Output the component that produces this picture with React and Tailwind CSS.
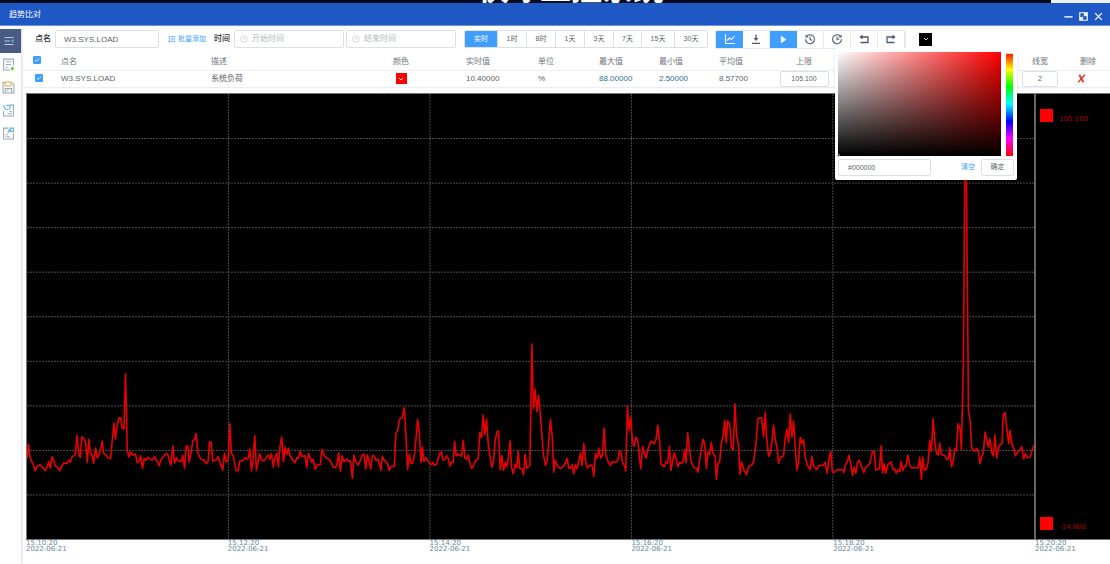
import { useState } from "react";
import clsx from "clsx";

const ranges = [
  { label: "实时", className: "w-8" },
  { label: "1时", className: "w-[29px]" },
  { label: "8时", className: "w-[29px]" },
  { label: "1天", className: "w-[29px]" },
  { label: "3天", className: "w-[29px]" },
  { label: "7天", className: "w-7" },
  { label: "15天", className: "w-[33px]" },
  { label: "30天", className: "w-[33px]" },
];

const ticks = ["15:10:20", "15:12:20", "15:14:20", "15:16:20", "15:18:20"];

// x,y pairs on a 3024 x 1335 grid, one slice for every two minutes
const trace = [
  "0,1093 4,1050 9,1088 15,1103 20,1113 24,1129 31,1116 39,1111 46,1119 55,1128 61,1116 65,1102 70,1121 75,1087 80,1098 85,1115 92,1118 99,1129 105,1113 110,1106 120,1107 125,1098 130,1103 135,1088 145,1080 150,1022 155,1076 160,1089 165,1027 170,1031 176,1044 181,1105 186,1035 190,1074 196,1082 200,1107 206,1061 211,1091 218,1076 226,1040 230,1077 236,1081 243,1090 251,1093 256,1038 261,986 266,1034 271,991 276,970 281,970 286,1001 291,1004 296,839 301,1066 306,1088 311,1073 320,1082 326,1079 331,1105 337,1099 341,1084 347,1122 352,1092 357,1098 363,1089 376,1098 383,1087 389,1098 397,1114 402,1096 412,1084 418,1077 423,1080 427,1098 432,1112 438,1055 443,1106 448,1090 454,1099 463,1102 468,1083 473,1121 478,1056 483,1056 487,1103 493,1074 498,1038 503,1037 508,1018 513,1074 521,1094 531,1097 539,1108 544,1100 548,1043 553,1043 558,1100 568,1097 574,1086 581,1108 588,1127 593,1077 598,1103 604,1094",
  "609,988 614,1078 619,1082 628,1129 634,1129 639,1100 649,1098 654,1090 659,1094 665,1090 669,1064 674,1129 679,1094 684,1024 689,1128 694,1101 699,1078 704,1096 712,1100 719,1088 725,1082 730,1094 734,1078 740,1119 744,1092 750,1076 755,1117 760,1054 765,1029 770,1102 775,1058 780,1080 785,1061 790,1084 797,1096 805,1105 810,1090 815,1092 820,1070 825,1086 835,1084 840,1120 845,1077 850,1088 855,1104 859,1094 866,1124 872,1112 881,1110 886,1065 893,1084 901,1092 911,1098 919,1118 927,1120 931,1108 936,1075 941,1131 946,1084 951,1102 961,1094 966,1101 971,1099 977,1152 982,1082 987,1101 994,1112 999,1103 1007,1081 1012,1080 1017,1124 1022,1081 1027,1098 1032,1124 1037,1084 1043,1085 1048,1098 1054,1094 1059,1112 1063,1128 1067,1086 1073,1098 1082,1106 1088,1128 1093,1116 1103,1115 1108,1015 1113,1010 1118,976 1127,969 1133,940 1138,1028 1143,1126 1148,1080 1153,1107 1158,1106 1164,1078 1169,1023 1173,975 1178,1013 1183,1104 1187,1058 1192,1101 1198,1090 1206,1103",
  "1214,1111 1219,1104 1224,1113 1230,1109 1239,1078 1244,1072 1249,1097 1254,1096 1260,1084 1265,1092 1270,1115 1275,1103 1280,1104 1284,1041 1289,1084 1295,1080 1305,1086 1310,1038 1315,1092 1320,1094 1325,1082 1330,1106 1335,1122 1340,1116 1346,1100 1355,1091 1360,1014 1365,1029 1370,962 1375,1020 1380,974 1385,1048 1390,1086 1396,1118 1401,1100 1406,1041 1411,1012 1416,1010 1421,1126 1426,1084 1431,1128 1436,1104 1441,1117 1446,1086 1451,1039 1455,1118 1460,1138 1466,1110 1471,1120 1475,1071 1480,1123 1486,1123 1491,1141 1496,1080 1501,1121 1510,1113 1513,948 1516,749 1521,942 1526,885 1531,952 1536,904 1541,953 1551,1083 1557,1113 1562,1098 1567,1040 1572,975 1577,1024 1582,1133 1586,1097 1592,1113 1602,1123 1613,1113 1622,1092 1627,1122 1633,1119 1637,1111 1642,1138 1647,1111 1652,1123 1662,1076 1667,1114 1672,1047 1677,1097 1683,1120 1693,1111 1698,1117 1702,1146 1707,1078 1712,1092 1717,1061 1723,1092 1728,1082 1733,1001 1738,1079 1744,1099 1752,1113 1758,1102 1768,1104 1774,1098 1779,1070 1784,1074 1788,1102 1794,1114 1798,1130 1803,935 1808,1007 1813,969",
  "1818,1041 1823,1056 1829,1028 1834,1036 1839,1088 1843,1123 1849,1056 1853,1073 1859,1091 1865,1063 1874,1040 1884,1048 1889,1034 1894,992 1900,1046 1904,1110 1914,1117 1919,1102 1924,1106 1929,1056 1934,1128 1940,1094 1944,1075 1950,1098 1955,1116 1960,1104 1966,1107 1971,1096 1975,1065 1979,1105 1984,1015 1989,1060 1994,1100 2003,1120 2010,1121 2015,1133 2020,1094 2025,1065 2030,1035 2035,1048 2040,1122 2045,1073 2050,1080 2055,1044 2060,1076 2066,1084 2070,1155 2075,1107 2080,1103 2085,1046 2091,1021 2095,978 2100,1046 2104,980 2110,988 2116,1062 2121,1066 2126,928 2131,1024 2136,1047 2141,1140 2146,1103 2153,1126 2161,1141 2167,1116 2177,1111 2182,1102 2189,1048 2195,972 2206,970 2212,1028 2217,953 2221,1028 2227,1086 2232,1076 2237,1043 2242,992 2247,1034 2252,1060 2257,1106 2263,1088 2272,1085 2277,1030 2282,1005 2287,1044 2292,959 2297,1028 2302,980 2307,1063 2312,1127 2317,1103 2322,1029 2327,1046 2332,1036 2337,1088 2343,1111 2352,1126 2357,1086 2362,1114 2371,1126 2378,1114 2391,1112 2397,1104 2403,1137 2408,1094 2414,1072",
  "2418,1128 2423,1135 2432,1126 2449,1126 2453,1134 2458,1110 2463,1103 2468,1083 2474,1110 2479,1142 2484,1118 2489,1136 2494,1105 2499,1097 2504,1111 2513,1134 2518,1120 2531,1108 2539,1071 2544,1069 2549,1127 2560,1124 2565,1054 2569,1136 2574,1108 2579,1136 2585,1111 2595,1102 2600,1125 2606,1124 2610,1136 2615,1126 2621,1131 2625,1101 2630,1129 2635,1117 2640,1114 2645,1082 2650,1109 2655,1120 2676,1120 2681,1088 2686,1155 2690,1088 2695,1127 2701,1123 2706,1104 2711,1038 2716,1071 2721,973 2727,1049 2731,1076 2736,1082 2741,1046 2746,1080 2757,1084 2762,1095 2767,1093 2771,1060 2776,1117 2782,1098 2786,1062 2791,1068 2796,988 2802,1003 2806,1066 2812,798 2816,250 2818,191 2821,250 2826,798 2827,948 2832,978 2837,1061 2846,1070 2852,1062 2857,1074 2862,1108 2867,1088 2872,1074 2877,1013 2887,1058 2892,1034 2897,1073 2902,1084 2907,1021 2912,1091 2917,1062 2923,1050 2928,1048 2932,960 2937,955 2942,998 2948,1048 2952,1008 2957,1047 2963,1062 2968,1084 2973,1075 2982,1066 2987,1057 2993,1094 2998,1077 3004,1090 3013,1088 3018,1068 3024,1053",
];

const tools = [
  { name: "chart", icon: <TrendIcon />, active: true },
  { name: "download", icon: <DownloadIcon /> },
  { name: "play", icon: <PlayIcon />, active: true },
  { name: "back in time", icon: <ClockIcon flip /> },
  { name: "forward in time", icon: <ClockIcon /> },
  { name: "undo", icon: <TurnIcon /> },
  { name: "redo", icon: <TurnIcon flip /> },
];

function Icon({ children, className = "size-3", ...rest }) {
  return (
    <svg
      viewBox="0 0 24 24"
      fill="none"
      stroke="currentColor"
      strokeWidth="2"
      className={className}
      aria-hidden="true"
      {...rest}
    >
      {children}
    </svg>
  );
}

function TrendIcon() {
  return (
    <Icon strokeWidth="2.2">
      <path d="M3 2v19h19" />
      <path d="M6 15l5-5 4 3 6-7" />
    </Icon>
  );
}

function PlayIcon() {
  return (
    <Icon className="size-[9px]">
      <path d="M5 2l15 10L5 22z" fill="currentColor" stroke="none" />
    </Icon>
  );
}

function DownloadIcon() {
  return (
    <Icon strokeWidth="2.5">
      <path d="M12 3v10M4 20.5h16" />
      <path d="M7 10h10l-5 6z" fill="currentColor" stroke="none" />
    </Icon>
  );
}

function ClockIcon({ flip }) {
  return (
    <Icon strokeWidth="2.2" className={clsx("size-3", flip && "-scale-x-100")}>
      <path d="M19.5 7.5A9 9 0 1 0 21 12.5" />
      <path d="M21 3v6h-6z" fill="currentColor" stroke="none" />
      {flip ? <path d="M12 7v5.5l-4 2.5" /> : <path d="M12 7v5.5h4.5" />}
    </Icon>
  );
}

function TurnIcon({ flip }) {
  return (
    <Icon strokeWidth="2.6" className={clsx("size-3", flip && "-scale-x-100")}>
      <path d="M5 8h15v11H5" />
      <path d="M9 3v10L3 8z" fill="currentColor" stroke="none" />
    </Icon>
  );
}

function ClockFace() {
  return (
    <Icon className="size-2 shrink-0 text-[#c0c4cc]">
      <circle cx="12" cy="12" r="10" />
      <path d="M12 6v7h5" />
    </Icon>
  );
}

function Chevron() {
  return (
    <Icon className="size-2 text-white" strokeWidth="2.5">
      <path d="m6 9 6 6 6-6" />
    </Icon>
  );
}

function Sidebar() {
  const item = "flex h-[23px] w-full items-center justify-center text-[#9aa8ba]";
  return (
    <nav className="flex w-[22px] shrink-0 flex-col border-r border-[#dfe3ea] shadow-sm">
      <button aria-label="menu" className="flex h-6 items-center justify-center bg-[#495b80] pr-1 text-[#b8cbe6]">
        <Icon>
          <path d="M3 5h18M3 12h11M3 19h18" />
          <path d="M21 8v8l-5-4z" fill="#69b7f5" stroke="none" />
        </Icon>
      </button>
      <div className="flex flex-col pr-1">
        <button aria-label="new" className={item}>
          <Icon className="size-[13px]">
            <path d="M21 14V2H3v20h12" />
            <path d="M7 7h10M7 12h10M7 17h5" />
            <path d="M19 16v7M15.5 19.5h7" stroke="#67c23a" strokeWidth="2.5" />
          </Icon>
        </button>
        <button aria-label="save" className={item}>
          <Icon className="size-[13px]">
            <path d="M6 3H2v19h20V7l-4-4" />
            <path d="M6 2h11v7H6z" stroke="#e6b566" />
            <path d="M6 22v-8h12v8M9 18h3" />
          </Icon>
        </button>
        <button aria-label="import" className={item}>
          <Icon className="size-[13px]">
            <path d="M13 2h8v20H3v-9" />
            <path d="M10 18h8M14 14h4" />
            <path d="M2 3l5 7h5M8 4a4 4 0 1 1 5 6" stroke="#57b6dc" />
          </Icon>
        </button>
        <button aria-label="export" className={item}>
          <Icon className="size-[13px]">
            <path d="M12 2H3v20h18V12" />
            <path d="M7 18h8M7 14h3" />
            <path d="M11 12c0-5 3-7 6-7M15 2h6v6h-6z" stroke="#57b6dc" />
          </Icon>
        </button>
      </div>
    </nav>
  );
}

function DateInput({ id, label }) {
  return (
    <div className="flex h-[18px] w-[110px] items-center gap-1 rounded-xs border border-[#dcdfe6] pl-[5px]">
      <ClockFace />
      <input
        id={id}
        aria-label={label}
        placeholder={label}
        className="w-full min-w-0 text-[8px] leading-3 outline-none placeholder:text-[#b4b8c0]"
      />
    </div>
  );
}

function ColorPanel() {
  const [hex, setHex] = useState("#000000");
  return (
    <div className="absolute top-[15px] -left-[84px] z-10 w-[182px] rounded-xs bg-white px-[3px] pt-1 pb-1 shadow-md">
      <div className="flex justify-between pr-px">
        <div className="relative h-[104px] w-[163px] bg-[#ff0000]">
          <div className="h-full bg-linear-to-r/srgb from-white to-transparent">
            <div className="h-full bg-linear-to-t/srgb from-black to-transparent" />
          </div>
          <span className="absolute -bottom-px -left-px size-[3px] rounded-full border border-[#bbb]" />
        </div>
        <div className="relative h-[104px] w-[7px] bg-[linear-gradient(to_bottom,#f00_0%,#ff0_17%,#0f0_33%,#0ff_50%,#00f_67%,#f0f_83%,#f00_100%)]">
          <span className="absolute inset-x-0 top-0 h-0.5 border-b border-[#ddd] bg-white" />
        </div>
      </div>
      <div className="mt-[3px] flex h-[17px] items-center">
        <input
          aria-label="color"
          value={hex}
          onChange={(e) => setHex(e.target.value)}
          className="h-full w-[93px] rounded-xs border border-[#dcdfe6] px-[9px] text-[7px] text-[#606266]"
        />
        <button className="ml-auto px-[6px] text-[7px] text-[#409eff]">清空</button>
        <button className="h-full w-[33px] rounded-xs border border-[#dcdfe6] text-[7px] text-[#606266]">
          确定
        </button>
      </div>
    </div>
  );
}

function Toolbar() {
  const [point, setPoint] = useState("W3.SYS.LOAD");
  const [range, setRange] = useState("实时");

  return (
    <div className="flex h-[18px] items-center pl-[13px]">
      <label htmlFor="point" className="w-5 text-[8px] font-medium text-[#303133]">
        点名
      </label>
      <input
        id="point"
        value={point}
        onChange={(e) => setPoint(e.target.value)}
        className="h-[18px] w-[104px] rounded-xs border border-[#dcdfe6] px-2 text-[8px]"
      />
      <button className="ml-[9px] flex items-center gap-[2px] text-[7px] text-[#409eff]">
        <Icon className="size-2" strokeWidth="2.5">
          <path d="M8 5h14M8 12h14M8 19h14M2 12h4M4 3v6M2 17h3v4H2" />
        </Icon>
        批量添加
      </button>
      <label htmlFor="start" className="ml-2 w-5 text-[8px] font-medium text-[#303133]">
        时间
      </label>
      <div className="flex gap-[2px]">
        <DateInput id="start" label="开始时间" />
        <DateInput id="end" label="结束时间" />
      </div>

      <div className="ml-2 flex h-[18px] overflow-hidden rounded-xs border border-[#dcdfe6]">
        {ranges.map((r, i) => (
          <button
            key={r.label}
            onClick={() => setRange(r.label)}
            className={clsx(
              "text-[7px]",
              r.className,
              i > 0 && "border-l border-[#dcdfe6]",
              r.label === range && "bg-[#409eff] text-white"
            )}
          >
            {r.label}
          </button>
        ))}
      </div>

      <div className="ml-[7px] flex h-[19px] overflow-hidden rounded-xs border border-[#e4e8f0]">
        {tools.map((t) => (
          <button
            key={t.name}
            aria-label={t.name}
            className={clsx(
              "flex w-[27px] items-center justify-center",
              t.active ? "bg-[#409eff] text-white" : "border-r border-[#e4e8f0] text-[#4a5878]"
            )}
          >
            {t.icon}
          </button>
        ))}
      </div>

      <div className="relative ml-[13px]">
        <button aria-label="background" className="flex size-[13px] items-center justify-center bg-black">
          <Chevron />
        </button>
        <ColorPanel />
      </div>
    </div>
  );
}

function Check({ label }) {
  const [on, setOn] = useState(true);
  return (
    <span className="relative inline-flex size-2 align-middle">
      <input
        type="checkbox"
        aria-label={label}
        checked={on}
        onChange={() => setOn(!on)}
        className="size-2 appearance-none rounded-[1px] border border-[#dcdfe6] checked:border-[#409eff] checked:bg-[#409eff]"
      />
      {on && (
        <Icon className="pointer-events-none absolute inset-0 size-2 text-white" strokeWidth="2.5">
          <path d="m6 12 4 4 8-8" />
        </Icon>
      )}
    </span>
  );
}

function PointTable() {
  const box = "h-4 rounded-xs border border-[#dcdfe6] text-center align-middle text-[7px]";
  return (
    <table className="mt-[3px] w-full table-fixed text-left text-[8px] leading-3">
      <colgroup>
        <col className="w-[39px]" />
        <col className="w-[150px]" />
        <col />
        <col className="w-[130px]" />
        <col className="w-[72px]" />
        <col className="w-[61px]" />
        <col className="w-[60px]" />
        <col className="w-[60px]" />
        <col className="w-[55px]" />
        <col className="w-[60px]" />
        <col className="w-[180px]" />
        <col className="w-[52px]" />
        <col className="w-11" />
      </colgroup>
      <thead>
        <tr className="h-[19px] border-b border-[#ebeef5] text-[#6f737a] [&>th]:p-0 [&>th]:pt-[3px] [&>th]:font-normal">
          <th className="pt-0! pl-[11px]!">
            <Check label="all" />
          </th>
          <th>点名</th>
          <th>描述</th>
          <th className="text-center">颜色</th>
          <th>实时值</th>
          <th>单位</th>
          <th>最大值</th>
          <th>最小值</th>
          <th>平均值</th>
          <th className="text-center">上限</th>
          <th />
          <th className="text-center">线宽</th>
          <th className="text-center">删除</th>
        </tr>
      </thead>
      <tbody>
        <tr className="h-[17px] border-b border-[#ebeef5] [&>td]:p-0">
          <td className="pl-[13px]!">
            <Check label="W3.SYS.LOAD" />
          </td>
          <td>W3.SYS.LOAD</td>
          <td>系统负荷</td>
          <td>
            <button aria-label="line color" className="mx-auto flex size-[11px] items-center justify-center bg-[#ff0000]">
              <Chevron />
            </button>
          </td>
          <td>10.40000</td>
          <td>%</td>
          <td className="text-[#2f7096]">88.00000</td>
          <td className="text-[#2f7096]">2.50000</td>
          <td>8.57700</td>
          <td className="text-center leading-none">
            <input aria-label="upper limit" defaultValue="105.100" className={clsx(box, "w-[49px]")} />
          </td>
          <td />
          <td className="text-center leading-none">
            <input aria-label="line width" defaultValue="2" className={clsx(box, "w-9")} />
          </td>
          <td>
            <button aria-label="delete" className="mr-auto ml-[11px] block text-[#e03c31]">
              <Icon className="size-[9px]" strokeWidth="5">
                <path d="M6 2l11 20" />
                <path d="M21 2 3 22" strokeWidth="4" />
              </Icon>
            </button>
          </td>
        </tr>
      </tbody>
    </table>
  );
}

function Limit({ value }) {
  return (
    <div className="flex items-center gap-[6px]">
      <span className="size-[13px] bg-[#ff0000]" />
      <span className="pt-2 text-[7px] leading-[7px] text-[#a80000]">{value}</span>
    </div>
  );
}

function TimeLabel({ time }) {
  return (
    <div>
      {time}
      <br />
      2022-06-21
    </div>
  );
}

function TrendChart() {
  const lines = [1, 2, 3, 4, 5, 6, 7, 8, 9];
  return (
    <div className="mt-[5px] flex flex-1 flex-col pl-1 font-['DejaVu_Sans',sans-serif]">
      <div className="flex flex-1 border border-r-0 border-[#777] bg-black">
        <div className="relative flex-1 border-r-2 border-[#666]">
          <svg
            viewBox="0 0 3024 1335"
            preserveAspectRatio="none"
            className="absolute inset-0 size-full"
            fill="none"
          >
            <g stroke="#4c4c4c" strokeWidth="1" strokeDasharray="2 1">
              {lines.map((n) => (
                <path key={n} d={`M0 ${n * 133.5}H3024`} vectorEffect="non-scaling-stroke" />
              ))}
              {[1, 2, 3, 4].map((n) => (
                <path key={n} d={`M${n * 605} 0V1335`} vectorEffect="non-scaling-stroke" />
              ))}
            </g>
            <polyline
              points={trace.join(" ")}
              stroke="#e80000"
              strokeWidth="1.6"
              strokeLinejoin="round"
              vectorEffect="non-scaling-stroke"
            />
          </svg>
        </div>
        <div className="flex w-[74px] flex-col justify-between pt-[14px] pb-2 pl-1">
          <Limit value="105.100" />
          <Limit value="-14.600" />
        </div>
      </div>
      <div className="flex h-6 text-[7px] leading-[6px] text-[#668799]">
        {ticks.map((t) => (
          <div key={t} className="flex-1">
            <TimeLabel time={t} />
          </div>
        ))}
        <div className="w-[75px]">
          <TimeLabel time="15:20:20" />
        </div>
      </div>
    </div>
  );
}

function App() {
  return (
    <div className="flex h-screen flex-col overflow-hidden bg-white font-['Liberation_Sans','Noto_Sans_CJK_SC',sans-serif] text-[#606266]">
      <div className="flex h-[3px] shrink-0 items-end overflow-hidden bg-[#020c1e]">
        <div className="flex-1" />
        <div className="pl-8 text-[31px] leading-[27px] font-bold text-white">快冰工控系统</div>
        <div className="flex flex-1 justify-end">
          <span className="h-[3px] w-[59px] bg-[#eef0f2]" />
        </div>
      </div>
      <header className="flex h-[23px] shrink-0 items-center justify-between border-b border-[#6c93dc] bg-[#1d58c4] pr-[7px] pl-[9px] text-white">
        <h1 className="pt-px text-[8px]">趋势比对</h1>
        <div className="flex items-center gap-[6px] pt-1">
          <button aria-label="minimize">
            <Icon className="size-[9px]" strokeWidth="3.5">
              <path d="M1 13h22" />
            </Icon>
          </button>
          <button aria-label="maximize">
            <Icon className="size-[9px]" strokeWidth="3">
              <path d="M2 2h20v20H2zM13 5h6v6M19 5l-6 6M11 19H5v-6M5 19l6-6" />
            </Icon>
          </button>
          <button aria-label="close">
            <Icon className="size-[9px]" strokeWidth="3.5">
              <path d="M3 3l18 18M21 3 3 21" />
            </Icon>
          </button>
        </div>
      </header>
      <div className="flex flex-1 pt-[3px]">
        <Sidebar />
        <main className="flex min-w-0 flex-1 flex-col pt-px">
          <Toolbar />
          <PointTable />
          <TrendChart />
        </main>
      </div>
    </div>
  );
}

export default App;
